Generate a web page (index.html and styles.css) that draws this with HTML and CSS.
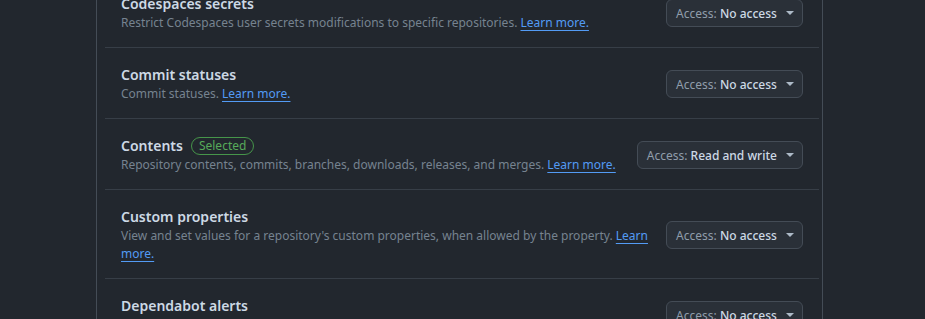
FILE: index.html
```html
<!DOCTYPE html>
<html>
<head>
	<title>Repository permissions</title>
	<link rel="stylesheet" href="styles.css">
</head>
<body>
<div class="box">
  <div class="row">
    <div class="info">
      <div class="name">Codespaces secrets</div>
      <div class="desc">Restrict Codespaces user secrets modifications to specific repositories. <a href="#">Learn more.</a></div>
    </div>
    <button class="btn"><span class="lbl">Access:</span> No access <svg class="caret" width="8" height="4" viewBox="0 0 8 4"><path d="M0 0h8L4 4z"/></svg></button>
  </div>
  <div class="row">
    <div class="info">
      <div class="name">Commit statuses</div>
      <div class="desc">Commit statuses. <a href="#">Learn more.</a></div>
    </div>
    <button class="btn"><span class="lbl">Access:</span> No access <svg class="caret" width="8" height="4" viewBox="0 0 8 4"><path d="M0 0h8L4 4z"/></svg></button>
  </div>
  <div class="row">
    <div class="info">
      <div class="name">Contents <span class="badge">Selected</span></div>
      <div class="desc">Repository contents, commits, branches, downloads, releases, and merges. <a href="#">Learn more.</a></div>
    </div>
    <button class="btn"><span class="lbl">Access:</span> Read and write <svg class="caret" width="8" height="4" viewBox="0 0 8 4"><path d="M0 0h8L4 4z"/></svg></button>
  </div>
  <div class="row">
    <div class="info">
      <div class="name">Custom properties</div>
      <div class="desc">View and set values for a repository's custom properties, when allowed by the property. <a href="#">Learn more.</a></div>
    </div>
    <button class="btn"><span class="lbl">Access:</span> No access <svg class="caret" width="8" height="4" viewBox="0 0 8 4"><path d="M0 0h8L4 4z"/></svg></button>
  </div>
  <div class="row">
    <div class="info">
      <div class="name">Dependabot alerts</div>
      <div class="desc">View Dependabot alerts. <a href="#">Learn more.</a></div>
    </div>
    <button class="btn"><span class="lbl">Access:</span> No access <svg class="caret" width="8" height="4" viewBox="0 0 8 4"><path d="M0 0h8L4 4z"/></svg></button>
  </div>
</div>
</body>
</html>
```

FILE: styles.css
```css
html,body{margin:0;padding:0;}
body{
  background:#22272e;
  color:#adbac7;
  font-family:"Noto Sans", sans-serif;
  overflow:hidden;
}
.box{
  margin:-23px 0 0 96px;
  width:714px;
  border-left:1px solid #444c56;
  border-right:1px solid #444c56;
  padding:0 3px 0 8px;
}
.row{
  display:flex;
  align-items:center;
  justify-content:space-between;
  gap:18px;
  padding:17px 16px 15px;
  border-bottom:1px solid #373e47;
}
.name{
  font-size:14px;
  font-weight:600;
  line-height:20px;
  color:#cdd9e5;
  display:flex;
  align-items:center;
  gap:8px;
}
.desc{
  font-size:12px;
  line-height:18px;
  color:#768390;
}
.desc a{
  color:#539bf5;
  text-decoration:underline;
  text-underline-offset:3px;
}
.badge{
  font-size:12px;
  font-weight:400;
  line-height:16px;
  padding:0 7px;
  border:1px solid #46954a;
  border-radius:2em;
  color:#57ab5a;
}
.btn{
  flex:none;
  display:flex;
  align-items:center;
  height:28px;
  padding:0 8px 0 9px;
  font-family:inherit;
  font-size:12px;
  font-weight:500;
  color:#cdd9e5;
  background:#2a3038;
  border:1px solid #444c56;
  border-radius:6px;
  white-space:pre;
}
.lbl{color:#909dab;font-weight:400;}
.caret{margin-left:6px;fill:#adbac7;}
```
